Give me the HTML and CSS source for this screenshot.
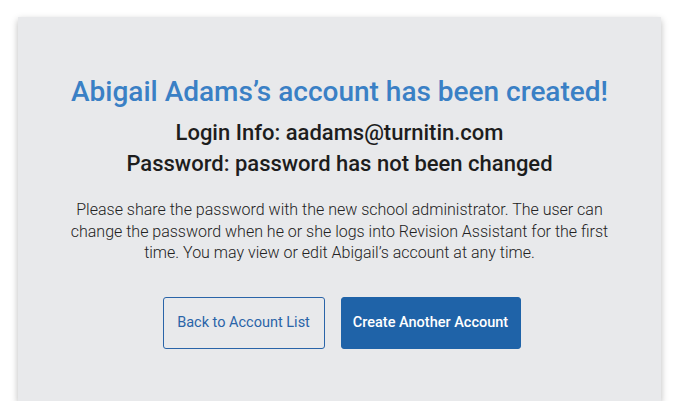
FILE: index.html
```html
<!doctype html>
<html lang="en">
    <head>
        <title>Account Created</title>
        <link rel="stylesheet" href="styles.css">
    </head>
    <body>
        <div class="card">
            <h1 class="title">Abigail Adams’s account has been created!</h1>
            <h2 class="info">Login Info: aadams@turnitin.com</h2>
            <h2 class="info">Password: password has not been changed</h2>
            <p class="note">
                Please share the password with the new school administrator. The user can
                change the password when he or she logs into Revision Assistant for the first
                time. You may view or edit Abigail’s account at any time.
            </p>
            <div class="actions">
                <button class="btn btn-outline">Back to Account List</button>
                <button class="btn btn-primary">Create Another Account</button>
            </div>
        </div>
    </body>
</html>
```

FILE: styles.css
```css
body {
    margin: 0;
    padding: 17px 18px 0 18px;
    font-family: Roboto, "Liberation Sans", sans-serif;
    background: #fff;
}
.card {
    background: #e8e9eb;
    height: 384px;
    box-sizing: border-box;
    padding-top: 59px;
    text-align: center;
    box-shadow: 0 3px 7px rgba(0, 0, 0, 0.28);
}
.title {
    margin: 0 0 9px 0;
    font-size: 28px;
    font-weight: 500;
    color: #3a80c5;
    line-height: 32px;
}
.info {
    margin: 0;
    font-size: 22px;
    font-weight: 500;
    color: #1d1d1d;
    line-height: 31px;
}
.note {
    margin: 20px auto 0 auto;
    width: 555px;
    font-size: 16px;
    font-weight: 300;
    line-height: 21.5px;
    color: #222;
}
.actions {
    margin-top: 33px;
    padding-left: 4px;
    display: flex;
    justify-content: center;
    gap: 16px;
}
.btn {
    height: 52px;
    font-family: inherit;
    font-size: 14.5px;
    border-radius: 3px;
    padding: 0;
    white-space: nowrap;
}
.btn-outline {
    background: transparent;
    border: 1px solid #2a64a8;
    color: #2a64a8;
    font-weight: 400;
    width: 162px;
}
.btn-primary {
    background: #1f63a8;
    border: 1px solid #1f63a8;
    color: #fff;
    font-weight: 500;
    width: 180px;
}
```
